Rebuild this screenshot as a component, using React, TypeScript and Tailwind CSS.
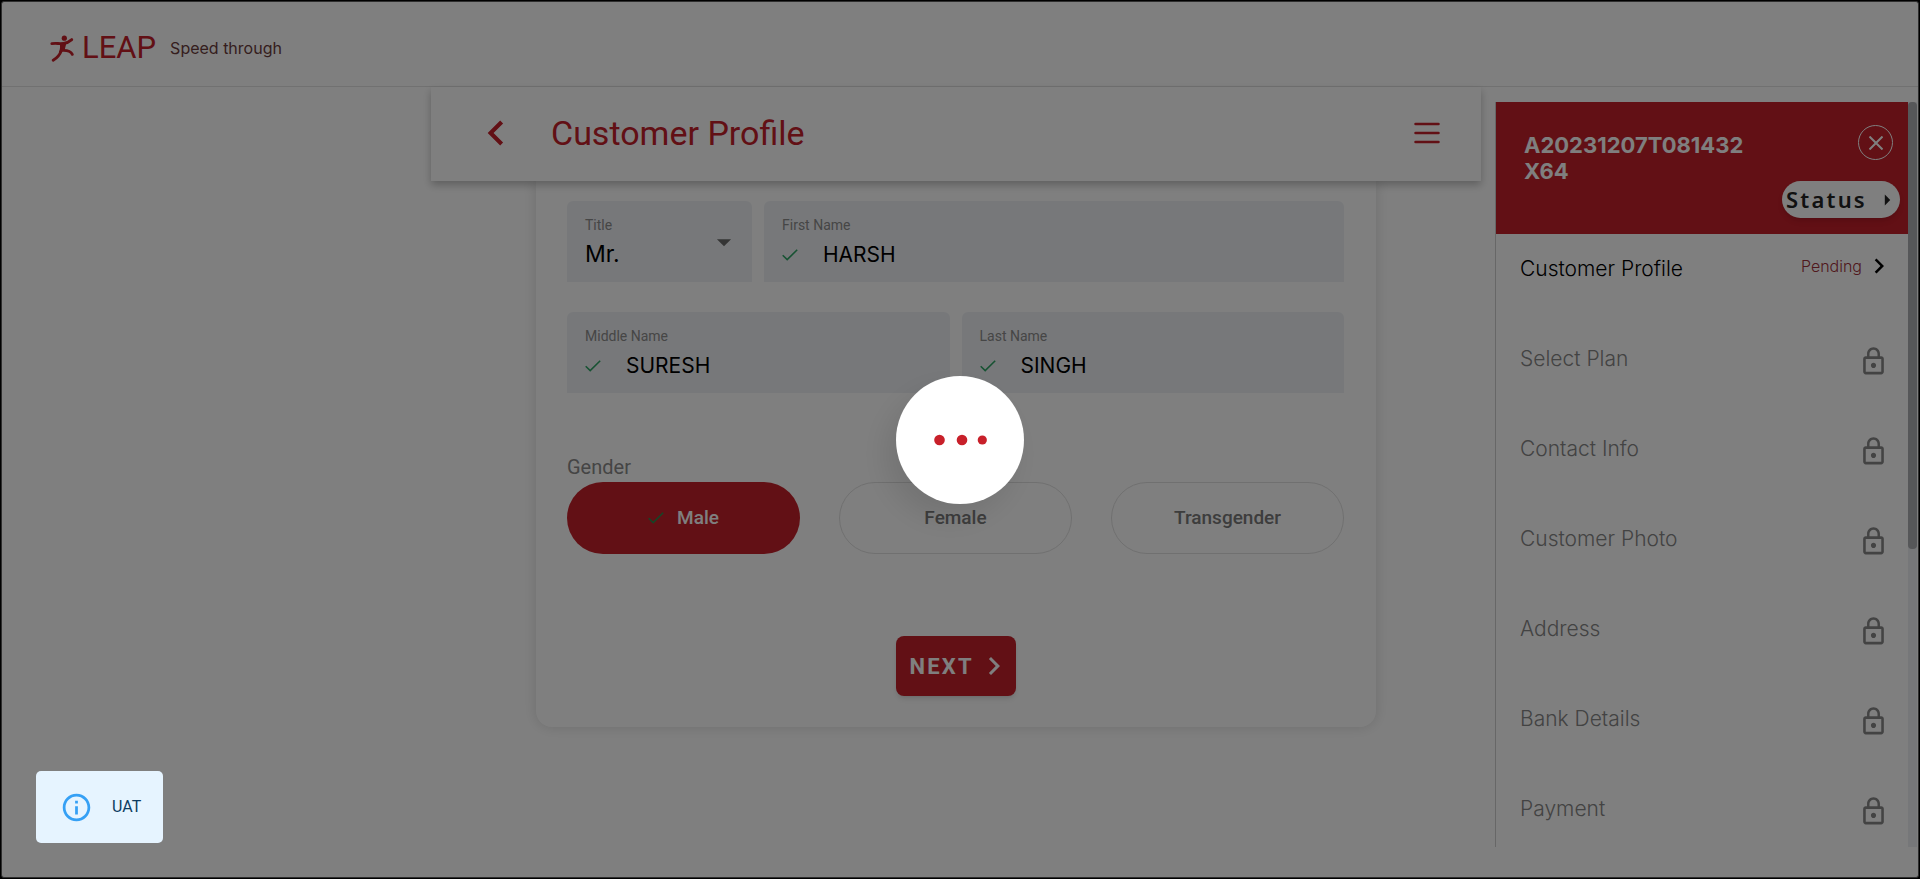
import React from "react";
import {
  MdArrowDropDown,
  MdArrowRight,
  MdChevronLeft,
  MdChevronRight,
  MdInfoOutline,
  MdLockOutline,
} from "react-icons/md";

const lockedSteps = ["Select Plan", "Contact Info", "Customer Photo", "Address", "Bank Details", "Payment"];

function Tick({ className }: { className: string }) {
  return (
    <svg viewBox="0 0 16 12" className={className} fill="none" stroke="currentColor" strokeWidth="1.6" aria-hidden="true">
      <path d="M0.7 6.2 L5.2 10.6 L15.2 0.8" />
    </svg>
  );
}

function NameField({ id, label, value }: { id: string; label: string; value: string }) {
  return (
    <div className="min-w-0 flex-1 rounded-t-md bg-[#eff1f5] px-[18px] pt-[14px] pb-2">
      <label htmlFor={id} className="block text-sm leading-5 text-[#8c8c8c]">
        {label}
      </label>
      <div className="flex h-[39px] items-center gap-[25px]">
        <Tick className="h-3 w-4 shrink-0 text-[#2fa566]" />
        <input
          id={id}
          defaultValue={value}
          className="w-full min-w-0 bg-transparent font-['Inter',sans-serif] text-[21px] leading-7 text-black outline-none"
        />
      </div>
    </div>
  );
}

function GenderOption({ label, selected }: { label: string; selected?: boolean }) {
  return (
    <button
      type="button"
      aria-pressed={!!selected}
      className={
        selected
          ? "flex h-[72px] items-center justify-center gap-[13px] rounded-full bg-[#c4202a] text-[19px] font-medium text-white"
          : "flex h-[72px] items-center justify-center rounded-full border border-[#e0e0e0] text-[19px] font-medium text-[#7a7a7a]"
      }
    >
      {selected && <Tick className="h-3 w-4 text-[#2b8a4e]" />}
      {label}
    </button>
  );
}

function Runner() {
  return (
    <svg viewBox="0 0 24 27" className="h-[27px] w-6 text-[#c4202a]" aria-hidden="true">
      <circle cx="14.3" cy="3.2" r="2.6" fill="currentColor" />
      <path
        d="M1.8 8.6 C6 8.2 10 8.8 13.5 8.4 C17 8 20 6.2 21.8 4.6"
        fill="none" stroke="currentColor" strokeWidth="2.8" strokeLinecap="round"
      />
      <path d="M9.4 8.2 L16.6 8 C15.6 11 15 13 14.8 15.4 L8.8 17.4 C10.4 13.6 10.4 11 9.4 8.2Z" fill="currentColor" />
      <path
        d="M11.5 15.2 C10 19.5 7 23 3.2 25.2 M12.5 15.4 C17 15.2 21 16.6 22.3 19.4"
        fill="none" stroke="currentColor" strokeWidth="2.8" strokeLinecap="round"
      />
    </svg>
  );
}

function Sidebar() {
  return (
    <aside className="mt-[15px] flex h-[calc(100vh-134px)] border-l border-[#cfcfcf]">
      <div className="min-w-0 flex-1 overflow-y-auto font-['Inter',sans-serif] [scrollbar-width:none]">
        <div className="flex justify-between bg-[#c4202a] text-white">
          <h2 className="w-[270px] pt-[30px] pl-7 text-[22px] leading-[26px] font-bold">
            A20231207T081432<br />X64
          </h2>
          <div className="flex flex-col items-end gap-[21px] pt-[23px] pb-4">
            <button
              type="button"
              aria-label="Close"
              className="mr-[15px] flex h-[35px] w-[35px] items-center justify-center rounded-full border border-white"
            >
              <svg viewBox="0 0 14 14" className="h-[14px] w-[14px]" stroke="currentColor" strokeWidth="2" aria-hidden="true">
                <path d="M0.5 0.5 L13.5 13.5 M13.5 0.5 L0.5 13.5" />
              </svg>
            </button>
            <button
              type="button"
              className="mr-2 flex h-[37px] w-[118px] items-center justify-between rounded-full bg-white pl-1 font-['Noto_Sans',sans-serif] text-[22px] font-semibold tracking-widest text-[#222] shadow-md"
            >
              Status
              <MdArrowRight className="h-[26px] w-[26px] shrink-0" />
            </button>
          </div>
        </div>
        <ul>
          <li className="flex h-[90px] items-start justify-between pt-[19px] pr-[14px] pl-6">
            <a href="#profile" className="text-[21px] leading-8 font-light text-black">Customer Profile</a>
            <span className="-mt-0.5 flex items-center text-base leading-[30px] font-light text-[#a0303a]">
              Pending
              <MdChevronRight className="ml-[2px] h-[30px] w-[30px] text-black" />
            </span>
          </li>
          {lockedSteps.map((step) => (
            <li key={step} className="flex h-[90px] items-start justify-between pt-[19px] pr-[19px] pl-6 text-[#868686]">
              <span className="text-[21px] leading-8 font-light">{step}</span>
              <MdLockOutline className="mt-[3px] h-[31px] w-[31px]" />
            </li>
          ))}
        </ul>
      </div>
      <div className="w-[9px] bg-[#edeef3]">
        <div className="h-3/5 rounded bg-[#adaeb3]" />
      </div>
    </aside>
  );
}

export default function App() {
  return (
    <div className="flex min-h-screen flex-col bg-black p-px font-['Roboto',sans-serif]">
      <div className="flex flex-1 flex-col rounded-[3px] border border-[#5c5c5c] bg-white">
        <header className="flex h-[85px] items-center border-b border-[#e2e2e2] pt-2 pl-12">
          <Runner />
          <span className="ml-2 text-[31px] leading-9 text-[#c4202a]">LEAP</span>
          <span className="ml-[14px] font-['Inter',sans-serif] text-base text-[#6b3c3c]">Speed through</span>
        </header>

        <div className="grid grid-cols-[minmax(0,429fr)_minmax(0,1050fr)_minmax(0,437fr)] items-start">
          <div />
          <main>
            <div className="relative z-10 flex h-[94px] items-center bg-white pr-[41px] pb-0.5 pl-10 text-[#c4202a] shadow-[0_4px_8px_rgba(0,0,0,0.25)]">
              <button type="button" aria-label="Back">
                <MdChevronLeft className="h-[50px] w-[50px]" />
              </button>
              <h1 className="ml-[30px] flex-1 text-[34px] leading-10">Customer Profile</h1>
              <button type="button" aria-label="Menu">
                <svg viewBox="0 0 26 22" className="h-[22px] w-[26px]" stroke="currentColor" strokeWidth="2.5" strokeLinecap="round" aria-hidden="true">
                  <path d="M1.5 2 H24.5 M1.5 11 H24.5 M1.5 20 H24.5" />
                </svg>
              </button>
            </div>

            <form className="mx-auto flex w-4/5 flex-col rounded-b-2xl bg-white pt-5 pr-8 pb-[31px] pl-[31px] shadow-[0_0_14px_rgba(0,0,0,0.14)]">
              <div className="flex gap-3">
                <div className="relative w-[185px] rounded-t-md bg-[#eff1f5] px-[18px] pt-[14px] pb-2">
                  <label htmlFor="title" className="block text-sm leading-5 text-[#8c8c8c]">Title</label>
                  <select
                    id="title"
                    defaultValue="Mr."
                    className="block h-[39px] w-full appearance-none bg-transparent font-['Inter',sans-serif] text-[23px] text-black outline-none"
                  >
                    <option>Mr.</option>
                    <option>Mrs.</option>
                  </select>
                  <MdArrowDropDown className="pointer-events-none absolute top-6 right-[11px] h-[34px] w-[34px] text-[#6a6a6a]" />
                </div>
                <NameField id="first" label="First Name" value="HARSH" />
              </div>
              <div className="mt-[30px] flex gap-3">
                <NameField id="middle" label="Middle Name" value="SURESH" />
                <NameField id="last" label="Last Name" value="SINGH" />
              </div>

              <fieldset className="mt-[60px]">
                <legend className="pb-px text-xl leading-7 text-[#8a8a8a]">Gender</legend>
                <div className="grid grid-cols-3 gap-[39px]">
                  <GenderOption label="Male" selected />
                  <GenderOption label="Female" />
                  <GenderOption label="Transgender" />
                </div>
              </fieldset>

              <button
                type="button"
                className="mt-[82px] flex h-[60px] w-[120px] items-center justify-between self-center rounded-lg bg-[#c4202a] pr-1 pl-[14px] text-[22px] font-bold tracking-widest text-white shadow-md"
              >
                NEXT
                <MdChevronRight className="h-9 w-9 shrink-0" />
              </button>
            </form>
          </main>
          <div className="pr-px pl-[14px]">
            <Sidebar />
          </div>
        </div>
      </div>

      <div className="fixed inset-0 z-20 flex items-center justify-center bg-black/50">
        <div role="status" aria-label="Loading" className="flex h-32 w-32 items-center justify-center rounded-full bg-white shadow-[-10px_14px_30px_rgba(0,0,0,0.1)]">
          <svg viewBox="0 0 54 12" className="h-3 w-[54px]" fill="#c8202a" aria-hidden="true">
            <circle cx="6.5" cy="6" r="5.3" />
            <circle cx="29" cy="6" r="5.3" />
            <circle cx="49.3" cy="6" r="4.6" />
          </svg>
        </div>
      </div>

      <div className="fixed bottom-9 left-9 z-30 flex h-[72px] w-[127px] items-center rounded-[5px] bg-[#e6f4ff] pl-6">
        <MdInfoOutline className="h-[33px] w-[33px] text-[#35a0f5]" />
        <span className="ml-[19px] text-base text-[#0d3c61]">UAT</span>
      </div>
    </div>
  );
}
